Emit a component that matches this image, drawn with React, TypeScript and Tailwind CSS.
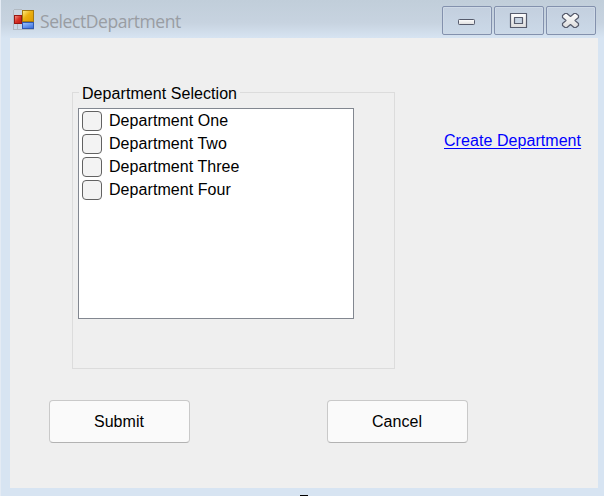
import React from "react";

const departments = ["Department One", "Department Two", "Department Three", "Department Four"];

function AppIcon() {
  return (
    <svg width="21" height="21" viewBox="0 0 21 21" className="block" shapeRendering="crispEdges">
      <defs>
        <linearGradient id="gold" x1="0" y1="0" x2="1" y2="1">
          <stop offset="0" stopColor="#fff08a" />
          <stop offset="0.45" stopColor="#ecb010" />
          <stop offset="1" stopColor="#dc9a00" />
        </linearGradient>
        <linearGradient id="red" x1="0" y1="0" x2="1" y2="1">
          <stop offset="0" stopColor="#f49a8c" />
          <stop offset="0.5" stopColor="#d83226" />
          <stop offset="1" stopColor="#b81410" />
        </linearGradient>
        <linearGradient id="blue" x1="0" y1="0" x2="0.6" y2="1">
          <stop offset="0" stopColor="#a4c8ff" />
          <stop offset="1" stopColor="#3f74e0" />
        </linearGradient>
      </defs>
      <path d="M0.5 0.5H9M0.5 0.5V20.5H21M4.5 15V20" fill="none" stroke="#b1b9c1" />
      <rect x="1" y="1" width="8" height="5" fill="#cbd5df" />
      <rect x="9.5" y="1.5" width="11" height="11" fill="url(#gold)" stroke="#a37811" />
      <rect x="1.5" y="6.5" width="7" height="8" fill="url(#red)" stroke="#9a1712" />
      <rect x="9.5" y="13.5" width="11" height="6" fill="url(#blue)" stroke="#3159b0" />
    </svg>
  );
}

function CaptionButton({ label, children }: { label: string; children: React.ReactNode }) {
  return (
    <button
      aria-label={label}
      className="flex h-[29px] w-[50px] items-center justify-center rounded-[2px] border border-[#8391ad] bg-linear-to-b from-[#c3cfde] to-[#cbd9e8] shadow-[inset_0_0_0_1px_#ced9e6]"
    >
      <svg width="20" height="17" viewBox="0 0 20 17" className="block">
        <defs>
          <linearGradient id="glyph" x1="0" y1="0" x2="0" y2="1">
            <stop offset="0" stopColor="#ffffff" />
            <stop offset="1" stopColor="#dcdcdc" />
          </linearGradient>
        </defs>
        {children}
      </svg>
    </button>
  );
}

function PushButton({ children }: { children: React.ReactNode }) {
  return (
    <button className="flex h-[43px] w-[141px] items-center justify-center rounded-[4px] border border-[#c9c9c9] border-b-[#b2b2b2] bg-[#fafafa] pt-px pr-px text-[16px] tracking-[0.06px]">
      {children}
    </button>
  );
}

export default function App() {
  return (
    <div className="flex h-[496px] w-[604px] flex-col overflow-hidden border-l border-[#e4ebf4] bg-[#d7e4f2] font-['Liberation_Sans',Arial,sans-serif] text-[16px] leading-[18px] tracking-[0.06px] text-black">
      <header className="flex h-[38px] shrink-0 items-start bg-linear-to-b from-[#c1ceda] from-0% via-[#c7d3e0] via-60% to-[#d7e4f2] pl-3">
        <div className="pt-[9px]">
          <AppIcon />
        </div>
        <h1 className="w-[408px] shrink-0 whitespace-nowrap pt-[9px] pl-[6px] font-['Open_Sans','Noto_Sans',sans-serif] text-[17.5px] leading-[25px] tracking-[-0.42px] text-[#999da3]">
          SelectDepartment
        </h1>
        <div className="flex gap-[2px] pt-[6px]">
          <CaptionButton label="Minimize">
            <rect x="1.5" y="7.5" width="16" height="5" rx="0.8" fill="url(#glyph)" stroke="#565b6c" />
          </CaptionButton>
          <CaptionButton label="Maximize">
            <path d="M1.5 1.5h16v14h-16zM5.5 5.5v6h8v-6z" fillRule="evenodd" fill="url(#glyph)" stroke="#565b6c" strokeWidth="1.2" strokeLinejoin="round" />
          </CaptionButton>
          <CaptionButton label="Close">
            <path d="M4 1.5H6L9.5 4.5L13 1.5H15L17.5 3.5V5.5L14 8.5L17.5 11.5V13.5L15 15.5H13L9.5 12.5L6 15.5H4L1.5 13.5V11.5L5 8.5L1.5 5.5V3.5Z" fill="url(#glyph)" stroke="#565b6c" strokeWidth="1.2" strokeLinejoin="round" />
          </CaptionButton>
        </div>
      </header>

      <main className="ml-[9px] h-[450px] w-[588px] shrink-0 bg-[#efefef]">
        <div className="flex h-[362px] items-start pt-[46px] pl-[62px]">
          <fieldset className="h-[285px] w-[323px] border border-[#dcdcdc] pl-[5px]">
            <legend className="ml-px h-[16px] px-[3px] leading-[20px]">Department Selection</legend>
            <ul className="mt-[8px] h-[211px] w-[276px] border border-[#828790] bg-white pt-[2px] pl-[3px]">
              {departments.map((name) => (
                <li key={name} className="flex h-[23px] items-start">
                  <label className="flex items-start gap-[7px]">
                    <input type="checkbox" className="size-5 appearance-none rounded-[4px] border border-[#626262] bg-[#f3f3f3]" />
                    <span className="leading-[20px]">{name}</span>
                  </label>
                </li>
              ))}
            </ul>
          </fieldset>
          <a href="#" className="mt-[48px] ml-[49px] whitespace-nowrap text-[#0000ff] underline decoration-1 underline-offset-2">
            Create Department
          </a>
        </div>
        <div className="flex gap-[137px] pl-[39px]">
          <PushButton>Submit</PushButton>
          <PushButton>Cancel</PushButton>
        </div>
      </main>
      <div className="flex h-2 items-end pl-[299px]">
        <span className="h-px w-2 bg-black" />
      </div>
    </div>
  );
}
